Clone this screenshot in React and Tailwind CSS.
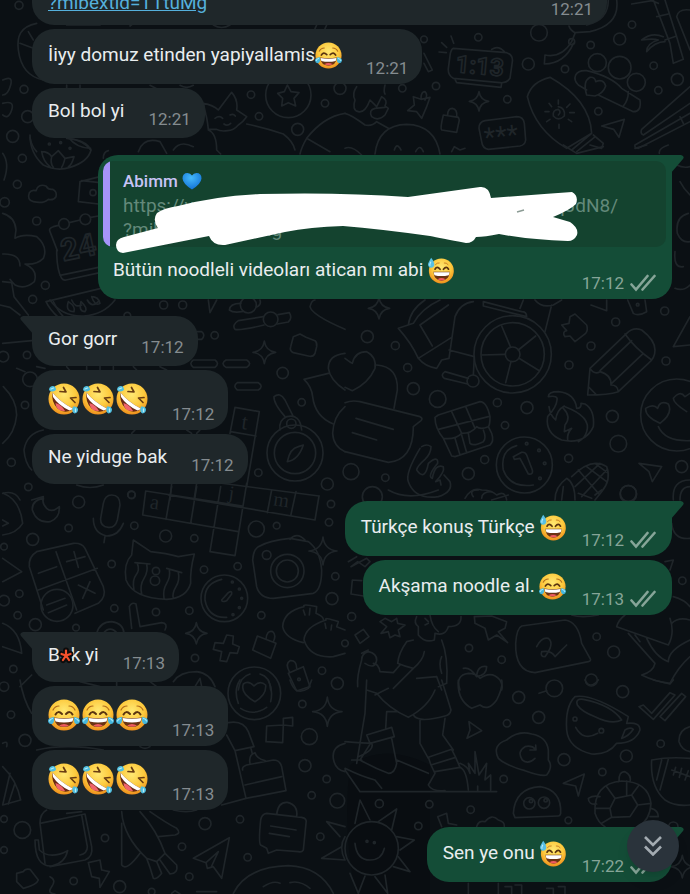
import React from "react";

const sparkle = (x, y, r) =>
  `M${x} ${y - r}Q${x + 4} ${y - 4} ${x + r} ${y}Q${x + 4} ${y + 4} ${x} ${y + r}Q${x - 4} ${y + 4} ${x - r} ${y}Q${x - 4} ${y - 4} ${x} ${y - r}Z`;

// Wallpaper doodles, grouped in tiles drawn at three times their final size.
const tiles = [
  {
    x: 0,
    y: 0,
    circles: [[57,16,12],[72,268,12],[753,284,11],[865,285,68],[975,310,11],[777,349,11],[893,388,18],[1020,265,18],[83,350,18]],
    paths: [
      "M110 70C60 80 50 110 55 150S80 230 130 240M60 130L100 145M85 95L100 120",
      "M8 240Q40 225 32 255T8 285M8 310Q45 300 35 330T8 345",
      "M610 310Q640 315 655 330L695 277Q715 300 710 330L740 350Q730 365 715 375Q700 392 683 392Q660 395 650 388L625 388Q622 360 618 345ZM645 355Q658 345 668 355M690 345Q700 340 706 348M672 372Q682 380 692 370M740 372Q800 385 850 402Q880 425 885 450M625 390Q650 400 650 450L662 462",
      "M862 255L873 275L897 278L882 295L887 318L865 308L845 318L848 295L833 280L853 275Z",
      "M1035 340Q970 350 920 415L990 455M920 415Q905 440 900 462",
      "M90 412Q95 440 110 455M200 415Q260 420 272 450",
      "M415 455Q430 410 480 425L500 460M520 450Q540 420 580 440M200 75H300M390 78L400 70M640 75Q665 90 690 75M950 75L945 86M980 75L975 86M200 255V265M240 255V265M450 256L470 266M540 256Q560 268 580 256",
    ],
  },
  {
    x: 345,
    y: 0,
    circles: [[237,118,10],[400,112,11],[582,98,25],[550,192,18],[660,207,11],[737,135,11],[824,117,18],[861,74,11],[926,197,11],[997,238,18],[940,271,11],[760,334,11],[487,298,11],[273,258,11],[172,265,11],[757,188,27],[824,203,34],[874,247,27],[680,125,9]],
    paths: [
      "M325 145L485 158Q505 165 502 185L495 235Q485 250 465 248L325 235Q308 225 310 205L316 160Q320 146 325 145ZM330 238L335 248L468 262L470 250M440 148Q460 135 478 155M290 128L305 142M318 108L326 130M282 156L304 158M237 160L262 210L250 215L237 190",
      "M790 0Q790 60 725 75M815 0Q825 75 735 95L690 98Q675 90 672 78M690 100L680 125Q650 175 600 165L598 192Q660 190 685 130",
      "M860 12L920 2L940 10M925 0L975 130L985 190L1015 178L995 110L960 0M935 50L970 42M960 120L995 108M955 110Q920 95 890 120Q925 115 940 120Q905 130 905 155Q930 125 960 125M1035 30Q1000 25 995 50L1035 150",
      "M615 232Q560 245 547 290Q570 390 665 445L740 400Q735 300 615 232ZM680 450L740 400M695 455L748 412M745 405L775 430L770 445L735 435",
      "M640 345Q650 335 640 328Q622 330 625 348Q640 365 658 348Q662 325 640 320M640 300V312M675 312L665 322M688 338H674M680 365L670 358M642 385V373M605 365L615 358M600 335H612M612 310L620 320",
      "M725 270L700 255Q685 240 692 225Q700 210 725 212Q800 230 830 265L885 300Q890 335 865 335L760 285M750 288L725 285Q712 245 735 232Q750 230 752 245Q775 235 782 258Q775 280 750 288M850 275Q850 300 835 318",
      "M1035 260L890 388Q885 402 895 405L1035 310M1035 340L870 435Q868 445 880 445L1035 365M1005 350L1015 370",
      "M770 378L838 358L822 412L806 388Z",
      "M295 345L340 352L343 360L335 397L290 390Q285 385 295 345ZM308 345Q308 325 322 325Q338 328 335 350",
      "M420 362L515 350Q535 350 538 370L542 420Q540 435 525 438L430 448Q412 445 410 425L402 385Q402 365 420 362Z",
      sparkle(402, 304, 29),
      "M205 290L228 298L255 292L245 320L230 355L215 335L188 332L208 315ZM228 295Q228 275 240 275Q250 285 240 300",
      "M35 260Q20 280 30 300Q20 330 40 335Q60 340 75 300L95 320L110 290Q130 300 120 318L130 325L120 345Q100 365 80 350Q70 330 90 325L120 322M120 255Q115 275 120 282M0 340Q20 345 60 375Q80 380 95 365L130 385",
      "M90 462Q100 375 185 373Q270 375 285 462M148 450Q155 425 168 450M212 455Q225 430 235 455M320 455L328 440L345 450L360 445M0 445Q20 435 50 465",
    ],
    texts: [
      { t: "1:13", x: 330, y: 216, size: 72, rot: 5, bold: true },
      { t: "***", x: 420, y: 440, size: 80, rot: -6 },
    ],
  },
  {
    x: 0,
    y: 130,
    circles: [[38,19,18],[67,85,12],[52,163,12],[110,273,12],[136,466,12],[98,508,12],[14,217,14],[279,188,9],[192,282,16],[256,268,16],[148,42,3],[182,38,3],[210,55,3]],
    paths: [
      "M90 15Q90 70 130 105Q170 125 210 112Q265 95 273 60Q250 30 205 25M205 22Q230 55 272 55M125 65Q145 65 155 80L175 62L195 85L222 80Q215 105 205 110M125 65Q130 95 150 110M155 80Q150 100 160 112M195 85Q190 105 185 112M8 70Q30 100 12 150",
      "M100 215Q80 210 88 188Q95 178 108 182Q115 160 138 168Q145 180 158 178Q172 185 168 200Q160 212 145 208Q130 222 100 215Z",
      "M240 155L300 140M240 155L235 215L295 222M245 152L300 158M310 85Q310 65 325 62",
      "M175 286L160 290Q145 295 150 305L172 362M208 278L240 270M272 262L295 258M170 360Q170 420 185 445Q190 452 198 450L300 428M180 436L295 412",
      "M8 250Q45 260 48 300Q45 320 45 325Q70 310 110 320Q145 350 130 385Q110 405 75 402Q115 420 103 455Q75 480 45 465Q35 455 30 448M8 372Q60 370 60 408M8 455L35 458L42 500L85 555",
      "M138 515L325 470M138 515Q150 540 175 562M160 515Q175 545 190 560M205 515Q195 545 222 545Q228 530 205 515M243 515Q235 545 255 545Q265 535 243 515M275 500Q285 530 300 520Q295 500 275 500",
    ],
    texts: [{ t: "24", x: 190, y: 394, size: 92, rot: -12, bold: true }],
  },
  {
    x: 0,
    y: 300,
    circles: [[491,15,12],[548,15,12],[382,47,10],[644,106,11],[848,219,17],[905,307,11],[874,371,14],[75,315,11],[81,165,11],[34,487,12],[85,561,11],[395,585,11],[775,518,11],[982,552,18],[885,459,84],[885,459,62],[90,238,22],[10,170,16],[745,15,24],[812,58,22]],
    paths: [
      "M150 0Q185 50 250 48Q310 45 345 0M215 0Q225 25 245 15M262 0Q275 25 295 5",
      "M722 10Q690 10 688 30Q700 40 730 34M768 22Q785 15 780 0M790 50L715 62Q695 75 705 88Q720 92 792 75M832 72L865 66Q878 55 868 38L834 44",
      "M590 95H605Q618 105 605 118H590M580 180H645Q660 190 645 202H580Q565 190 580 180ZM678 180H740Q758 190 740 202H678Q660 190 678 180ZM712 248H775Q792 258 775 270H712Q697 258 712 248Z",
      sparkle(793, 157, 34),
      "M880 110L900 102L918 112L945 122Q952 128 950 140L945 160Q940 172 925 168L880 158Q868 152 872 140Z",
      "M985 220L912 238Q935 260 938 290Q945 350 1000 372M1035 160Q985 165 985 205Q990 240 1035 270M930 20Q935 45 1035 88M930 20Q935 0 945 0",
      "M1035 320Q1000 350 998 400Q1000 440 1035 455",
      "M840 390Q835 360 860 350Q900 340 905 390M855 350Q820 310 822 290Q840 275 855 300L880 350M895 440Q870 445 862 485Q895 480 910 435Z",
      "M705 322L778 335L740 560M705 322L690 400M692 395L768 408M590 540L957 588M515 550L510 600M590 550L582 600",
      "M8 130L95 122M10 260Q50 300 50 345Q45 400 8 430M130 390Q80 400 72 450Q75 490 95 510M50 205L75 215M110 200L135 205M0 15L30 22L60 45M625 0L630 38L650 0",
      "M8 580Q45 570 60 600M95 600L130 590V600M230 555Q270 570 310 555M200 200L210 212M260 200V212M300 198V212M340 200V212M400 200L410 210M480 200L500 210M395 400L405 390M560 390L575 400M590 400L600 390",
    ],
    texts: [{ t: "t", x: 722, y: 386, size: 66, rot: 8, serif: true }],
  },
  {
    x: 345,
    y: 300,
    circles: [[67,110,18],[151,137,12],[188,203,12],[205,266,18],[278,297,25],[457,308,12],[546,323,18],[480,376,11],[419,479,12],[370,521,18],[121,533,11],[18,515,24],[82,590,30],[672,195,12],[738,138,12],[812,66,12],[959,33,12],[963,183,12],[802,349,18],[820,431,25],[671,475,12],[1010,500,18],[850,582,25],[503,163,116],[503,163,95],[503,163,22],[384,243,18],[538,495,84],[995,345,108],[878,14,4],[545,431,4],[582,451,4],[599,490,4],[585,535,4]],
    paths: [
      sparkle(102, 25, 32),
      "M160 85L205 70Q230 25 285 0M190 75Q195 30 240 0M225 75L262 138M160 85Q200 130 220 175L320 112M220 175Q240 200 275 205L290 180L312 175L330 50Q345 10 385 5M225 75L310 15M312 150L388 170M370 235L300 215Q285 225 298 235L368 252M388 170L385 225M415 5L530 35Q545 35 545 50L415 18ZM600 95L620 15M525 25L535 0M570 0Q590 25 625 15L650 0",
      "M410 165L480 163M470 78L497 142M572 108L520 150M583 212L522 175M482 248L498 185",
      "M650 75L672 70L675 50L690 42L725 75Q730 90 722 100L690 125L675 108L660 110Q650 95 665 92Z",
      "M848 0L865 40Q880 50 905 35L900 0M738 15L785 32L785 0",
      "M735 205L845 100Q865 80 890 90Q930 120 930 150Q930 175 910 190L820 275Q790 285 728 285ZM840 102Q870 145 920 180M860 122L765 212M895 160L800 250M735 205Q748 225 765 215Q800 225 798 255Q818 255 820 275M732 262L755 285",
      "M1035 50L985 140L1035 135",
      "M0 175Q20 190 22 190Q30 155 65 155Q95 170 90 205Q70 250 22 272L0 262M95 195Q160 200 157 270L147 325",
      "M0 308Q20 300 45 305L225 350Q235 355 228 362L205 380Q205 480 130 487L0 455M33 355L145 388M22 398L95 420",
      "M280 345L405 305Q425 305 435 350Q435 375 430 380Q405 390 395 380Q380 400 350 400Q330 420 295 415Q270 385 270 352ZM320 335L350 400M362 320L390 385M280 388L430 350M295 415L320 468L330 470L435 435Q448 425 440 400L430 380M330 415L345 465M350 405L365 458M370 400L375 430Q385 440 415 425Q425 415 415 390",
      "M610 290Q640 285 636 300Q635 320 608 350Q600 400 650 420Q720 435 745 380Q750 330 720 312L708 310Q710 325 695 325Q690 280 640 275Q610 275 610 290ZM612 320Q615 345 632 360Q635 330 658 318M655 325Q680 350 660 375L658 395L680 385Q665 400 668 422M660 320Q740 350 725 395Q720 415 700 425",
      "M515 437Q465 450 475 510Q495 565 565 555M505 470L530 457Q540 455 545 465L562 510Q565 525 550 522L525 475L508 478Z",
      "M665 535Q630 560 630 600M665 535Q690 550 690 600M680 530Q740 470 785 500Q800 540 770 575L750 600M700 510L760 580M725 500L785 545M750 490L790 520M690 560L765 490M710 590L785 510M655 560L650 600",
      "M230 440Q245 430 258 440Q258 460 240 478Q215 500 215 510Q240 545 250 490Q280 465 278 490Q245 530 262 535Q270 490 295 500Q300 515 272 545L285 540L288 555M225 445Q180 520 190 545Q210 600 280 590Q325 575 315 545L297 525M360 595Q380 560 410 570Q440 570 455 585Q480 570 485 600",
      "M882 490L950 500L922 545L912 515Z",
      "M945 370Q900 350 902 325Q925 310 938 325Q945 300 970 312Q985 340 945 370M1025 335Q985 310 985 295Q1005 270 1020 290L1035 280M940 380Q960 425 1035 422M985 600Q980 540 1035 540M1005 600Q1005 560 1035 560",
    ],
  },
  {
    x: 0,
    y: 490,
    circles: [[236,36,18],[394,14,11],[206,114,11],[98,148,18],[403,107,11],[497,138,18],[583,145,11],[335,222,11],[612,239,11],[713,229,11],[769,117,24],[830,107,10],[993,42,11],[987,97,11],[1006,259,11],[996,326,18],[343,355,11],[468,366,11],[568,362,11],[784,376,11],[58,311,11],[53,376,11],[106,404,18],[228,413,10],[585,504,11],[40,537,11],[966,542,11],[1012,580,18],[673,325,70],[862,243,50],[862,243,33],[800,195,13],[171,346,48],[12,170,10],[12,332,16],[897,568,4],[697,276,3],[718,297,3],[725,325,3],[718,353,3],[699,374,3],[468,243,11],[465,272,14]],
    paths: [
      "M130 25Q95 30 97 60Q110 100 150 95Q180 85 178 50Q155 70 140 55Q125 40 130 25",
      "M335 15Q360 15 360 45L352 90Q345 115 325 112Q300 110 302 85L310 40Q315 15 335 15ZM280 85Q280 130 320 138Q355 138 370 100M315 138L312 158",
      "M110 185L220 160Q245 158 255 175L310 290Q320 320 295 340L225 370M110 185Q85 200 88 230L130 360M168 185L230 360M115 300L292 235M115 250L170 230M200 215L255 200M222 185L235 232M235 285L285 310M270 275L248 325M140 345L195 325M145 368L200 345",
      "M400 150L452 185Q500 190 535 200L583 192Q570 240 572 280Q560 325 500 328Q400 325 378 270Q370 220 395 195ZM405 218L450 222M500 235L545 248M412 220Q420 240 408 255T402 300M440 222Q445 245 432 265T425 312M508 240Q512 260 500 280T492 325M535 248Q540 270 528 290T520 325",
      "M437 3L728 48M505 15L945 90M428 75L715 125M630 185L705 197M957 18L945 90M437 3L428 75M515 -10L498 88M590 -10L572 100M662 -10L630 185M740 -20L705 197M815 0L802 68M888 5L872 78",
      "M775 170Q810 150 870 145L925 155Q960 180 965 240Q965 300 940 310L820 325Q780 325 770 290L758 210Q760 180 775 170ZM870 148Q890 125 915 150",
      sparkle(969, 183, 42),
      "M665 268Q612 280 615 330Q625 385 680 382M665 330L685 308Q697 300 695 312L680 332Q665 338 665 330Z",
      "M912 350Q850 365 848 410Q855 445 910 458M912 350Q905 340 950 350L948 370Q970 380 970 388M978 390Q915 410 912 450Q930 505 1000 500L1035 490M978 390Q970 380 1015 395L1010 410L1035 420M910 360L915 375M930 355L928 375M975 400L978 415M995 405L993 420",
      sparkle(589, 430, 32),
      "M680 435L700 438L698 462L718 470L712 490L690 488L680 515L660 512L665 485L640 478L645 458L670 460Z",
      "M772 438L828 460L812 505L758 480ZM798 448Q800 420 818 425Q830 435 820 455",
      "M865 550L910 530L930 590L890 603ZM868 545Q855 520 870 512Q890 510 890 535",
      "M388 350Q395 335 408 342L420 410L485 398Q505 400 495 420M388 350L395 415M290 430Q300 395 335 395Q370 400 372 430M310 430Q330 405 352 430",
      "M520 575Q540 545 590 545Q630 550 645 590M585 590L600 565L605 590M60 590L95 555M8 205L65 245L8 275M10 10Q60 30 68 100Q50 130 8 135M8 90L25 100L8 108M8 400Q60 420 65 490L8 470M240 575L300 590M350 575V590M450 575L470 590M715 600Q720 560 750 552M780 552Q810 560 812 600",
    ],
    texts: [
      { t: "a", x: 448, y: 55, size: 62, rot: 8, serif: true },
      { t: "j", x: 684, y: 26, size: 58, rot: 8, serif: true },
      { t: "m", x: 818, y: 46, size: 60, rot: 8, serif: true },
    ],
  },
  {
    x: 345,
    y: 490,
    circles: [[20,380,12],[372,474,11],[470,509,11],[755,440,11],[806,486,18],[739,570,18],[1012,272,11],[850,10,24],[0,460,10]],
    paths: [
      "M50 272L22 270L18 312L55 318M10 215L35 200M65 205L75 215L60 230L38 215L18 230Z",
      "M120 385L105 395L125 410L108 430L130 425L135 443L150 435L165 440L160 420L180 405L158 400L155 385L140 395ZM30 435L55 418L72 440L45 460Z",
      "M215 380Q205 400 220 410L220 435Q240 460 268 450L270 430Q300 440 310 410Q350 410 348 380M240 385L250 395M240 405L250 400M255 375Q260 410 280 425M205 450L185 455Q160 490 158 520Q180 530 205 535M290 450Q310 500 305 580L280 590M238 485Q235 510 205 535L145 595M275 560L215 565M105 545L145 548L165 525M50 510Q35 560 38 590M50 510Q50 490 70 485Q95 490 95 510Q90 540 60 520M50 490L70 480M105 545Q100 520 85 520M275 560L290 600M290 500Q280 520 290 550",
      "M388 380L440 378L485 395L480 415L460 425L488 458L455 435L430 450L420 415L390 400Z",
      "M345 600Q330 555 370 550Q395 550 405 565Q440 540 465 570Q475 590 470 600M355 535Q375 530 395 560Q425 555 425 530Q400 525 395 555",
      "M530 408L660 390Q700 395 710 460L735 505Q740 512 730 515L570 548Q510 545 512 460Q515 415 530 408ZM575 470Q590 440 610 445Q630 460 600 500Q585 500 590 485Q620 480 630 500L665 465",
      "M840 375Q820 390 815 410L970 465Q990 430 975 385M850 430L930 520Q925 545 890 555Q930 575 975 580Q1000 530 1035 500M870 435L885 455M905 445Q930 500 970 515Q970 480 1035 450M980 400Q1000 380 1035 390M680 375Q710 385 760 375M985 320Q1020 330 1035 350M980 100Q985 150 1035 145M960 215L985 210L975 240",
      "M130 0Q190 35 280 0M385 20Q370 0 400 0M410 25Q410 5 440 5M440 30L490 15M700 10L740 25M750 15L770 0",
    ],
  },
  {
    x: 0,
    y: 680,
    circles: [[33,104,11],[75,181,18],[67,450,25],[315,474,11],[221,603,11],[359,620,18],[455,635,10],[615,431,18],[720,418,11],[743,532,11],[546,500,11],[568,590,11],[961,470,11],[1012,362,22],[935,346,11],[980,297,11],[915,257,18],[928,170,24],[907,72,11],[12,20,14],[763,40,79],[12,510,10],[12,417,10]],
    paths: [
      "M715 70Q700 30 720 0M812 65Q820 30 805 0M722 85Q760 110 800 82M765 65Q720 40 730 12Q745 0 762 18Q780 0 797 15Q800 45 765 65Z",
      sparkle(982, 95, 44),
      "M800 138L850 135L848 188L798 185ZM850 115L878 112V138L850 135Z",
      "M685 128Q730 120 745 155L762 200L705 212L680 165M705 212L738 355L665 375M728 270Q725 260 740 255L820 240Q840 240 845 260L858 332L738 355M735 315L845 290M750 250Q745 225 765 218Q770 235 795 242M753 205L757 222",
      "M800 400L905 412Q922 415 918 430L910 510Q905 518 895 515L830 510L805 520L800 505L782 495Q775 490 782 420Q785 402 800 400ZM830 402Q835 365 862 367Q895 375 890 410M812 438L888 450M808 460L868 470",
      "M580 535L688 473L665 595L640 560L622 565L618 548ZM618 548L655 515L635 558",
      "M980 425L1035 440M980 425L1020 470M965 535L1035 540M965 535L1025 500M1035 470Q1015 500 1035 540",
      "M700 640Q740 560 865 557Q960 560 1000 640M790 620Q820 600 840 610M870 608Q900 600 930 625",
      "M120 430L255 402M120 430L135 550M120 430Q120 400 140 390M200 400L245 395M255 402L275 500Q280 530 255 540L150 560M245 405L262 500Q262 520 240 525",
      "M105 480Q105 560 155 558Q195 550 203 512Q150 540 118 510L115 480Z",
      "M365 395Q370 470 440 535L470 545L495 520Q470 450 420 395M450 395Q500 430 530 445Q545 460 525 465L475 470M365 430V555Q380 575 420 520M440 535Q450 560 460 595Q470 600 485 580L470 545M480 540L510 582Q535 580 530 555L495 520",
      "M265 548L300 540L305 570L328 575L300 622L298 595L275 590Z",
      "M50 580L70 575Q75 565 90 568L115 600Q110 615 70 625L50 605Z",
      "M150 590Q170 600 155 620T165 642M515 640L525 632L540 642M590 635H650M60 0Q70 60 95 100M110 210Q200 190 310 210M420 200Q435 210 450 200M8 260Q50 300 62 360L8 375M30 280L8 375M45 310L25 372M8 190Q25 180 20 200M870 0Q885 50 925 25L935 0M1035 190Q995 200 1000 235Q1005 270 1035 275M520 390Q560 400 590 390",
    ],
  },
  {
    x: 345,
    y: 680,
    circles: [[521,52,18],[486,130,11],[581,112,18],[628,25,25],[833,35,18],[657,239,18],[476,297,11],[253,373,11],[103,371,12],[377,389,11],[220,438,11],[670,421,10],[772,276,11],[844,228,18],[947,191,11],[80,505,80],[553,370,17],[597,368,17],[690,117,6],[769,152,7],[66,484,3],[88,488,3],[558,363,5],[602,361,5],[985,440,14]],
    paths: [
      "M582 40L605 32",
      "M95 40Q130 85 190 112Q250 80 270 30M90 45L130 25M65 0L60 100L35 250M65 30L95 40M155 95H125L122 145M290 0L318 90Q315 105 300 108Q220 130 205 105M225 118V190L250 235M300 115L293 165L325 210M65 165L140 142L148 170L75 190ZM78 188L45 240Q90 265 130 280Q150 280 155 250L140 175M250 232L320 208L332 232L258 255ZM258 255L270 280L250 315Q260 335 300 332M332 232L345 262Q365 270 370 330M270 275L345 262M155 240L250 280M0 185Q60 190 80 190Q90 210 40 230M0 265Q50 290 90 300L110 325M0 270L45 335H455M20 240H50M345 250Q370 260 375 280L370 250L390 280V215L402 285L425 250L420 300L437 285V330M398 318V332",
      "M340 0Q335 60 380 85L405 75Q430 95 455 60Q475 20 470 0M720 0Q735 30 760 0M925 0L975 12L985 0",
      "M372 125L410 152L366 175L375 150Z",
      "M460 235Q440 195 485 180Q520 150 560 162Q605 170 610 210V240Q625 260 605 285Q590 290 540 272Q480 255 460 235ZM570 235Q550 255 532 240Q515 215 540 200Q560 195 572 208M572 195L573 210H555",
      "M665 150Q660 80 690 50Q740 40 850 110L845 130Q885 125 885 150Q870 190 815 190Q790 225 740 222Q670 205 665 150ZM697 75Q690 55 715 58Q800 75 830 120Q800 135 750 110Q710 95 697 75ZM830 175L840 150Q855 140 865 148Q850 170 830 175ZM692 142Q715 185 758 160",
      "M882 80L895 75L920 100L975 38L990 45L925 118ZM945 110L1010 40L1022 50L960 122Z",
      "M920 240Q970 230 1035 235M920 240Q915 320 960 360Q990 380 1035 375M970 238L945 330M950 240L935 300M980 270L1035 290M992 262L985 285M1010 265L1003 292M1030 272L1020 300",
      "M1035 140Q1000 150 1002 185Q1010 210 1035 215",
      "M655 310L718 282L700 348L692 318Z",
      "M505 400Q510 325 585 320Q650 330 647 400Q645 408 640 408L510 413Z",
      "M822 305Q820 275 840 275Q860 285 855 305M750 400Q745 310 830 303Q910 305 918 370Q915 420 880 440M750 400Q760 430 780 440M795 385L810 355L860 345L878 375L855 410L800 412ZM810 355L785 320M860 345L880 318M878 375L918 370M795 385L750 385M800 412L770 430M845 345V303M755 372Q730 375 730 355Q745 345 765 350M918 385Q940 390 940 410L915 410",
      "M278 410L305 400L310 430L335 435M278 410L290 440M395 440Q400 420 420 425Q440 400 460 420Q480 425 478 440",
      "M30 430L45 360L75 420M100 425L155 387L140 450M155 470L208 480L165 510M160 530L195 575L145 560M120 585L128 640L90 590M60 588L40 640L15 580M30 490Q35 540 75 540Q110 540 118 505",
      "M370 640V610M460 642V610M480 620H500V640M510 615H530V640M605 625H625V642M640 620H660V640",
      sparkle(1012, 560, 34),
    ],
  },
  {
    x: 390,
    y: 145,
    circles: [],
    paths: ["M835 0Q805 10 808 25M870 110Q880 130 900 150M895 205Q855 215 862 265Q875 295 900 290M855 320Q850 370 880 365M855 430Q880 440 900 420M860 60Q880 70 900 65M520 0L560 25L640 5M735 10L770 0"],
  },
];

function Wallpaper() {
  return (
    <svg
      className="absolute inset-0 h-full w-full"
      viewBox="0 0 690 894"
      preserveAspectRatio="xMidYMid slice"
      fill="none"
      stroke="#1f2529"
      strokeLinecap="round"
      strokeLinejoin="round"
      aria-hidden="true"
    >
      <path d="M350 765Q385 742 430 765L430 894H356Q342 830 350 765Z" fill="#090d11" stroke="none" />
      {tiles.map((tile, i) => (
        <g key={i} transform={`translate(${tile.x} ${tile.y}) scale(0.33333)`} strokeWidth="5">
          {tile.circles.map(([x, y, r], n) => (
            <circle key={n} cx={x} cy={y} r={r} />
          ))}
          {tile.paths.map((d, n) => (
            <path key={n} d={d} />
          ))}
          {(tile.texts || []).map((w) => (
            <text
              key={w.t}
              transform={`translate(${w.x} ${w.y}) rotate(${w.rot})`}
              fontSize={w.size}
              fontWeight={w.bold ? 700 : 400}
              fontFamily={w.serif ? "Liberation Serif, serif" : "Roboto, sans-serif"}
              fill={w.bold ? "none" : "#1f2529"}
              stroke={w.bold ? "#1f2529" : "none"}
            >
              {w.t}
            </text>
          ))}
        </g>
      ))}
    </svg>
  );
}

function Face({ size, label, children }) {
  return (
    <svg className={size === "lg" ? "size-8 shrink-0" : "size-[27px] shrink-0"} viewBox="0 0 32 32" role="img" aria-label={label}>
      <defs>
        <radialGradient id="face" cx="50%" cy="35%" r="65%">
          <stop offset="0" stopColor="#ffe873" />
          <stop offset="0.6" stopColor="#fdc93c" />
          <stop offset="1" stopColor="#ee8f1c" />
        </radialGradient>
      </defs>
      {children}
    </svg>
  );
}

function Joy({ size }) {
  return (
    <Face size={size} label="😂">
      <circle cx="16" cy="16" r="15.5" fill="url(#face)" />
      <path d="M5 11Q7 7 11 7M27 11Q25 7 21 7" fill="none" stroke="#b06a1c" strokeWidth="1.2" strokeLinecap="round" />
      <path d="M7.5 15.5Q10 11 14 15M18 15Q22 11 24.5 15.5" fill="none" stroke="#5a3410" strokeWidth="2" strokeLinecap="round" />
      <path d="M6 18.5Q16 20 26 18.5Q25 28 16 28Q7 28 6 18.5Z" fill="#6b3313" />
      <path d="M6.5 19Q16 20.5 25.5 19L24.5 22.5Q16 24.5 7.5 22.5Z" fill="#fff" />
      <path d="M11 26.5Q16 23.5 21 26.5Q16 29 11 26.5Z" fill="#ee5a5f" />
      <path d="M6 18Q0 18.5 0 22Q.5 25.500 4 25Q6.5 24 6 18ZM26 18Q32 18.5 32 22Q31.5 25.5 28 25Q25.5 24 26 18Z" fill="#45b7dd" />
      <path d="M4.5 19.5Q2 20 1.5 22M27.5 19.5Q30 20 30.5 22" fill="none" stroke="#aee8f6" strokeWidth="1.2" strokeLinecap="round" />
    </Face>
  );
}

function Rofl({ size }) {
  return (
    <Face size={size} label="🤣">
      <circle cx="16" cy="16" r="15.5" fill="url(#face)" />
      <path d="M12 8.5L18 9L15.5 4.5M28 14.5L22.5 15L27 19.5" fill="none" stroke="#6a3d12" strokeWidth="1.7" strokeLinecap="round" strokeLinejoin="round" />
      <path d="M4.5 9.5Q12 19 25.5 26Q17 31.5 9.5 25.5Q3 19 4.5 9.5Z" fill="#6b2a14" />
      <path d="M4.5 9.5Q12 19 25.5 26L21.5 27.5Q10 22 5 14Z" fill="#fff" />
      <path d="M7.5 20Q14 22 17 28Q12 28.5 9.5 25.5Q7.5 23 7.5 20Z" fill="#f0636b" />
      <path d="M8 7Q8 3 4.5 3Q1 3.5 1 7Q3.5 10 8 7ZM25 23.5Q29.5 23 30 26.5Q30 30 26.5 30.5Q23 29 25 23.5Z" fill="#4fbfe0" />
      <path d="M3 6L5.5 5M27.5 26V28.5" stroke="#b9ecf8" strokeWidth="1.3" strokeLinecap="round" />
    </Face>
  );
}

function Sweat({ size }) {
  return (
    <Face size={size} label="😅">
      <circle cx="17" cy="16.5" r="14.8" fill="url(#face)" />
      <path d="M10 9Q12 6.5 14.5 7M20.5 7Q23 6.5 25 9" fill="none" stroke="#c47a20" strokeWidth="1.1" strokeLinecap="round" />
      <path d="M9.5 14.5Q12 10 15.5 14.5M19.5 14.5Q23 10 25.5 14.5" fill="none" stroke="#5a3410" strokeWidth="2" strokeLinecap="round" />
      <path d="M7.5 17.5H27Q26 28 17.2 28Q8.5 28 7.5 17.5Z" fill="#6b3313" />
      <path d="M7.8 18H26.8L25.8 21.5Q17 23.5 8.8 21.5Z" fill="#fff" />
      <path d="M12.5 26.3Q17 23.5 22 26.3Q17 29.3 12.5 26.3Z" fill="#ee5a5f" />
      <path d="M5 1Q9.5 7 8.5 10.5Q7 13.5 3.5 12.5Q.5 11 1.5 7.5Q3 4 5 1Z" fill="#58c0e6" />
      <path d="M4.5 6Q3 8.5 3.5 10" fill="none" stroke="#c3effb" strokeWidth="1.2" strokeLinecap="round" />
    </Face>
  );
}

function BlueHeart() {
  return (
    <svg className="size-5" viewBox="0 0 20 20" role="img" aria-label="💙">
      <defs>
        <radialGradient id="heart" cx="45%" cy="30%" r="70%">
          <stop offset="0" stopColor="#45b9fb" />
          <stop offset="1" stopColor="#1272d6" />
        </radialGradient>
      </defs>
      <path d="M10 18.500Q1 13 .5 7.500Q.5 2 5.500 2Q8.500 2 10 4.500Q11.500 2 14.500 2Q19.500 2 19.500 7.500Q19 13 10 18.500Z" fill="url(#heart)" />
    </svg>
  );
}

function DoubleCheck() {
  return (
    <svg className="h-[18px] w-[26px]" viewBox="0 0 26 18" fill="none" stroke="currentColor" strokeWidth="2.6" strokeLinecap="round" role="img" aria-label="Delivered">
      <path d="M1.5 10.5L6 15.5L17.5 2M12.5 15.5L24.5 2" />
    </svg>
  );
}

function Tail({ side }) {
  return side === "out" ? (
    <svg className="absolute left-full top-0 h-[18px] w-3" viewBox="0 0 12 18" aria-hidden="true">
      <path d="M-1 0H9Q13 1 11 4L-1 18Z" fill="#144d37" />
    </svg>
  ) : (
    <svg className="absolute right-full top-0 h-[18px] w-3" viewBox="0 0 12 18" aria-hidden="true">
      <path d="M13 0H3Q-1 1 1 4L13 18Z" fill="#1f272a" />
    </svg>
  );
}

function Time({ children, tall, out }) {
  return (
    <span className={`flex shrink-0 items-center gap-1.5 text-[17px] leading-5 ${tall ? "pb-[6px]" : "pb-[9px]"} ${out ? "text-[#86a598]" : "text-[#858c90]"}`}>
      <time>{children}</time>
      {out && <DoubleCheck />}
    </span>
  );
}

function Incoming({ children, time, tall, tail }) {
  return (
    <li className={`relative flex items-end gap-6 self-start bg-[#1f272a] pl-4 pr-[14px] ${tail ? "mt-[13px] rounded-[22px] rounded-tl-none" : "rounded-[22px]"}`}>
      {tail && <Tail side="in" />}
      <p className={`flex items-center pt-[11px] text-[19px] ${tall ? "pb-[14px]" : "pb-[15px]"}`}>{children}</p>
      <Time tall={tall}>{time}</Time>
    </li>
  );
}

function Outgoing({ children, time, tail }) {
  return (
    <li className={`relative flex items-end gap-4 self-end bg-[#144d37] px-4 ${tail ? "mt-[13px] rounded-[22px] rounded-tr-none" : "rounded-[22px]"}`}>
      {tail && <Tail side="out" />}
      <p className="flex items-center gap-1 pb-[14px] pt-[11px] text-[19px] leading-[30px]">{children}</p>
      <Time tall out>
        {time}
      </Time>
    </li>
  );
}

function BigEmojis({ children }) {
  return <span className="flex gap-0.5 pb-px pt-0.5">{children}</span>;
}

function Scribble() {
  return (
    <svg className="absolute left-[13px] top-[26px] h-[76px] w-[470px]" viewBox="111 181 470 76" aria-hidden="true">
      <path
        d="M123 253Q116 252 116 245Q116 239 124 237L158 228Q152 220 157 213Q164 208 178 206Q215 196 260 194Q340 192 408 197L480 187Q489 186 491 198Q530 195 572 192Q579 196 576 204Q570 210 553 217L570 222Q579 228 577 235Q574 241 568 241Q530 240 499 234Q485 237 476 237Q473 243 466 243Q440 238 430 236Q380 229 343 226Q310 227 285 232L225 245Q213 246 209 236Z"
        fill="#fff"
      />
      <path d="M517 212L524 210" stroke="#8b9b94" strokeWidth="1.5" />
    </svg>
  );
}

function QuotedReply() {
  return (
    <li className="relative mt-[13px] w-[574px] max-w-full self-end rounded-[20px] rounded-tr-none bg-[#144d37] pl-[5px] pr-[6px] pt-[6px]">
      <Tail side="out" />
      <blockquote className="flex h-[86px] overflow-hidden rounded-[10px] bg-[#14432f]">
        <span className="w-[7px] shrink-0 bg-[#a594f9]" />
        <div className="flex-1 pl-[13px] pr-12 pt-[9px]">
          <cite className="flex items-center gap-1 text-[17px] font-medium not-italic leading-[22px] text-[#c8c3f6]">
            Abimm
            <BlueHeart />
          </cite>
          <p className="mt-[2px] text-[19px] leading-6 text-[#63897a]">
            <span className="flex justify-between">
              <span>https://v</span>
              <span>qJdN8/</span>
            </span>
            ?mibextid=TTtuMg
          </p>
        </div>
      </blockquote>
      <Scribble />
      <div className="flex items-end justify-between pl-[10px] pr-[10px]">
        <p className="flex items-center gap-1 pb-[14px] pt-[8px] text-[19px] leading-[30px]">
          Bütün noodleli videoları atican mı abi
          <Sweat />
        </p>
        <Time tall out>
          17:12
        </Time>
      </div>
    </li>
  );
}

export default function App() {
  return (
    <main className="relative flex h-screen flex-col justify-end overflow-hidden bg-[#0b1014] font-['Roboto','Noto_Sans',sans-serif] text-[#e9edef]">
      <Wallpaper />
      <ul className="relative flex flex-col gap-1 pb-3 pl-8 pr-[18px]">
        <li className="flex w-[575px] max-w-full items-end justify-between rounded-[22px] bg-[#1f272a] pl-4 pr-[14px]">
          <a href="#video" className="pb-[10px] pt-[14px] text-[19px] leading-6 text-[#55b0dc] underline">
            ?mibextid=TTtuMg
          </a>
          <Time tall>12:21</Time>
        </li>
        <Incoming time="12:21" tall>
          <span className="leading-[30px]">İiyy domuz etinden yapiyallamis</span>
          <Joy />
        </Incoming>
        <Incoming time="12:21">
          <span className="leading-6">Bol bol yi</span>
        </Incoming>
        <QuotedReply />
        <Incoming time="17:12" tail>
          <span className="leading-6">Gor gorr</span>
        </Incoming>
        <Incoming time="17:12" tall>
          <BigEmojis>
            <Rofl size="lg" />
            <Rofl size="lg" />
            <Rofl size="lg" />
          </BigEmojis>
        </Incoming>
        <Incoming time="17:12">
          <span className="leading-6">Ne yiduge bak</span>
        </Incoming>
        <Outgoing time="17:12" tail>
          Türkçe konuş Türkçe
          <Sweat />
        </Outgoing>
        <Outgoing time="17:13">
          Akşama noodle al.
          <Joy />
        </Outgoing>
        <Incoming time="17:13" tail>
          <span className="leading-6">
            B
            <span className="relative">
              o
              <svg className="absolute inset-x-0 top-1 mx-auto h-4 w-3 overflow-visible" viewBox="0 0 12 16" strokeLinecap="round" aria-hidden="true">
                <path d="M6 3.5V8.5L9 13M6 8.5L3 13M1.5 7L6 8.5L10.5 7" fill="none" stroke="#0c0c0c" strokeWidth="6" />
                <path d="M6 3.5V8.5L9 13M6 8.5L3 13M1.5 7L6 8.5L10.5 7" fill="none" stroke="#f4512c" strokeWidth="2.2" />
              </svg>
            </span>
            k yi
          </span>
        </Incoming>
        <Incoming time="17:13" tall>
          <BigEmojis>
            <Joy size="lg" />
            <Joy size="lg" />
            <Joy size="lg" />
          </BigEmojis>
        </Incoming>
        <Incoming time="17:13" tall>
          <BigEmojis>
            <Rofl size="lg" />
            <Rofl size="lg" />
            <Rofl size="lg" />
          </BigEmojis>
        </Incoming>
        <Outgoing time="17:22" tail>
          Sen ye onu
          <Sweat />
        </Outgoing>
      </ul>
      <button type="button" aria-label="Scroll to latest" className="absolute bottom-[22px] right-[11px] flex size-[52px] items-center justify-center rounded-full bg-[#2a333b] text-[#a3abb1] shadow-lg">
        <svg className="h-5 w-[18px]" viewBox="0 0 18 20" fill="none" stroke="currentColor" strokeWidth="2.6" aria-hidden="true">
          <path d="M1 1L9 9L17 1M1 10.5L9 18.5L17 10.5" />
        </svg>
      </button>
    </main>
  );
}
